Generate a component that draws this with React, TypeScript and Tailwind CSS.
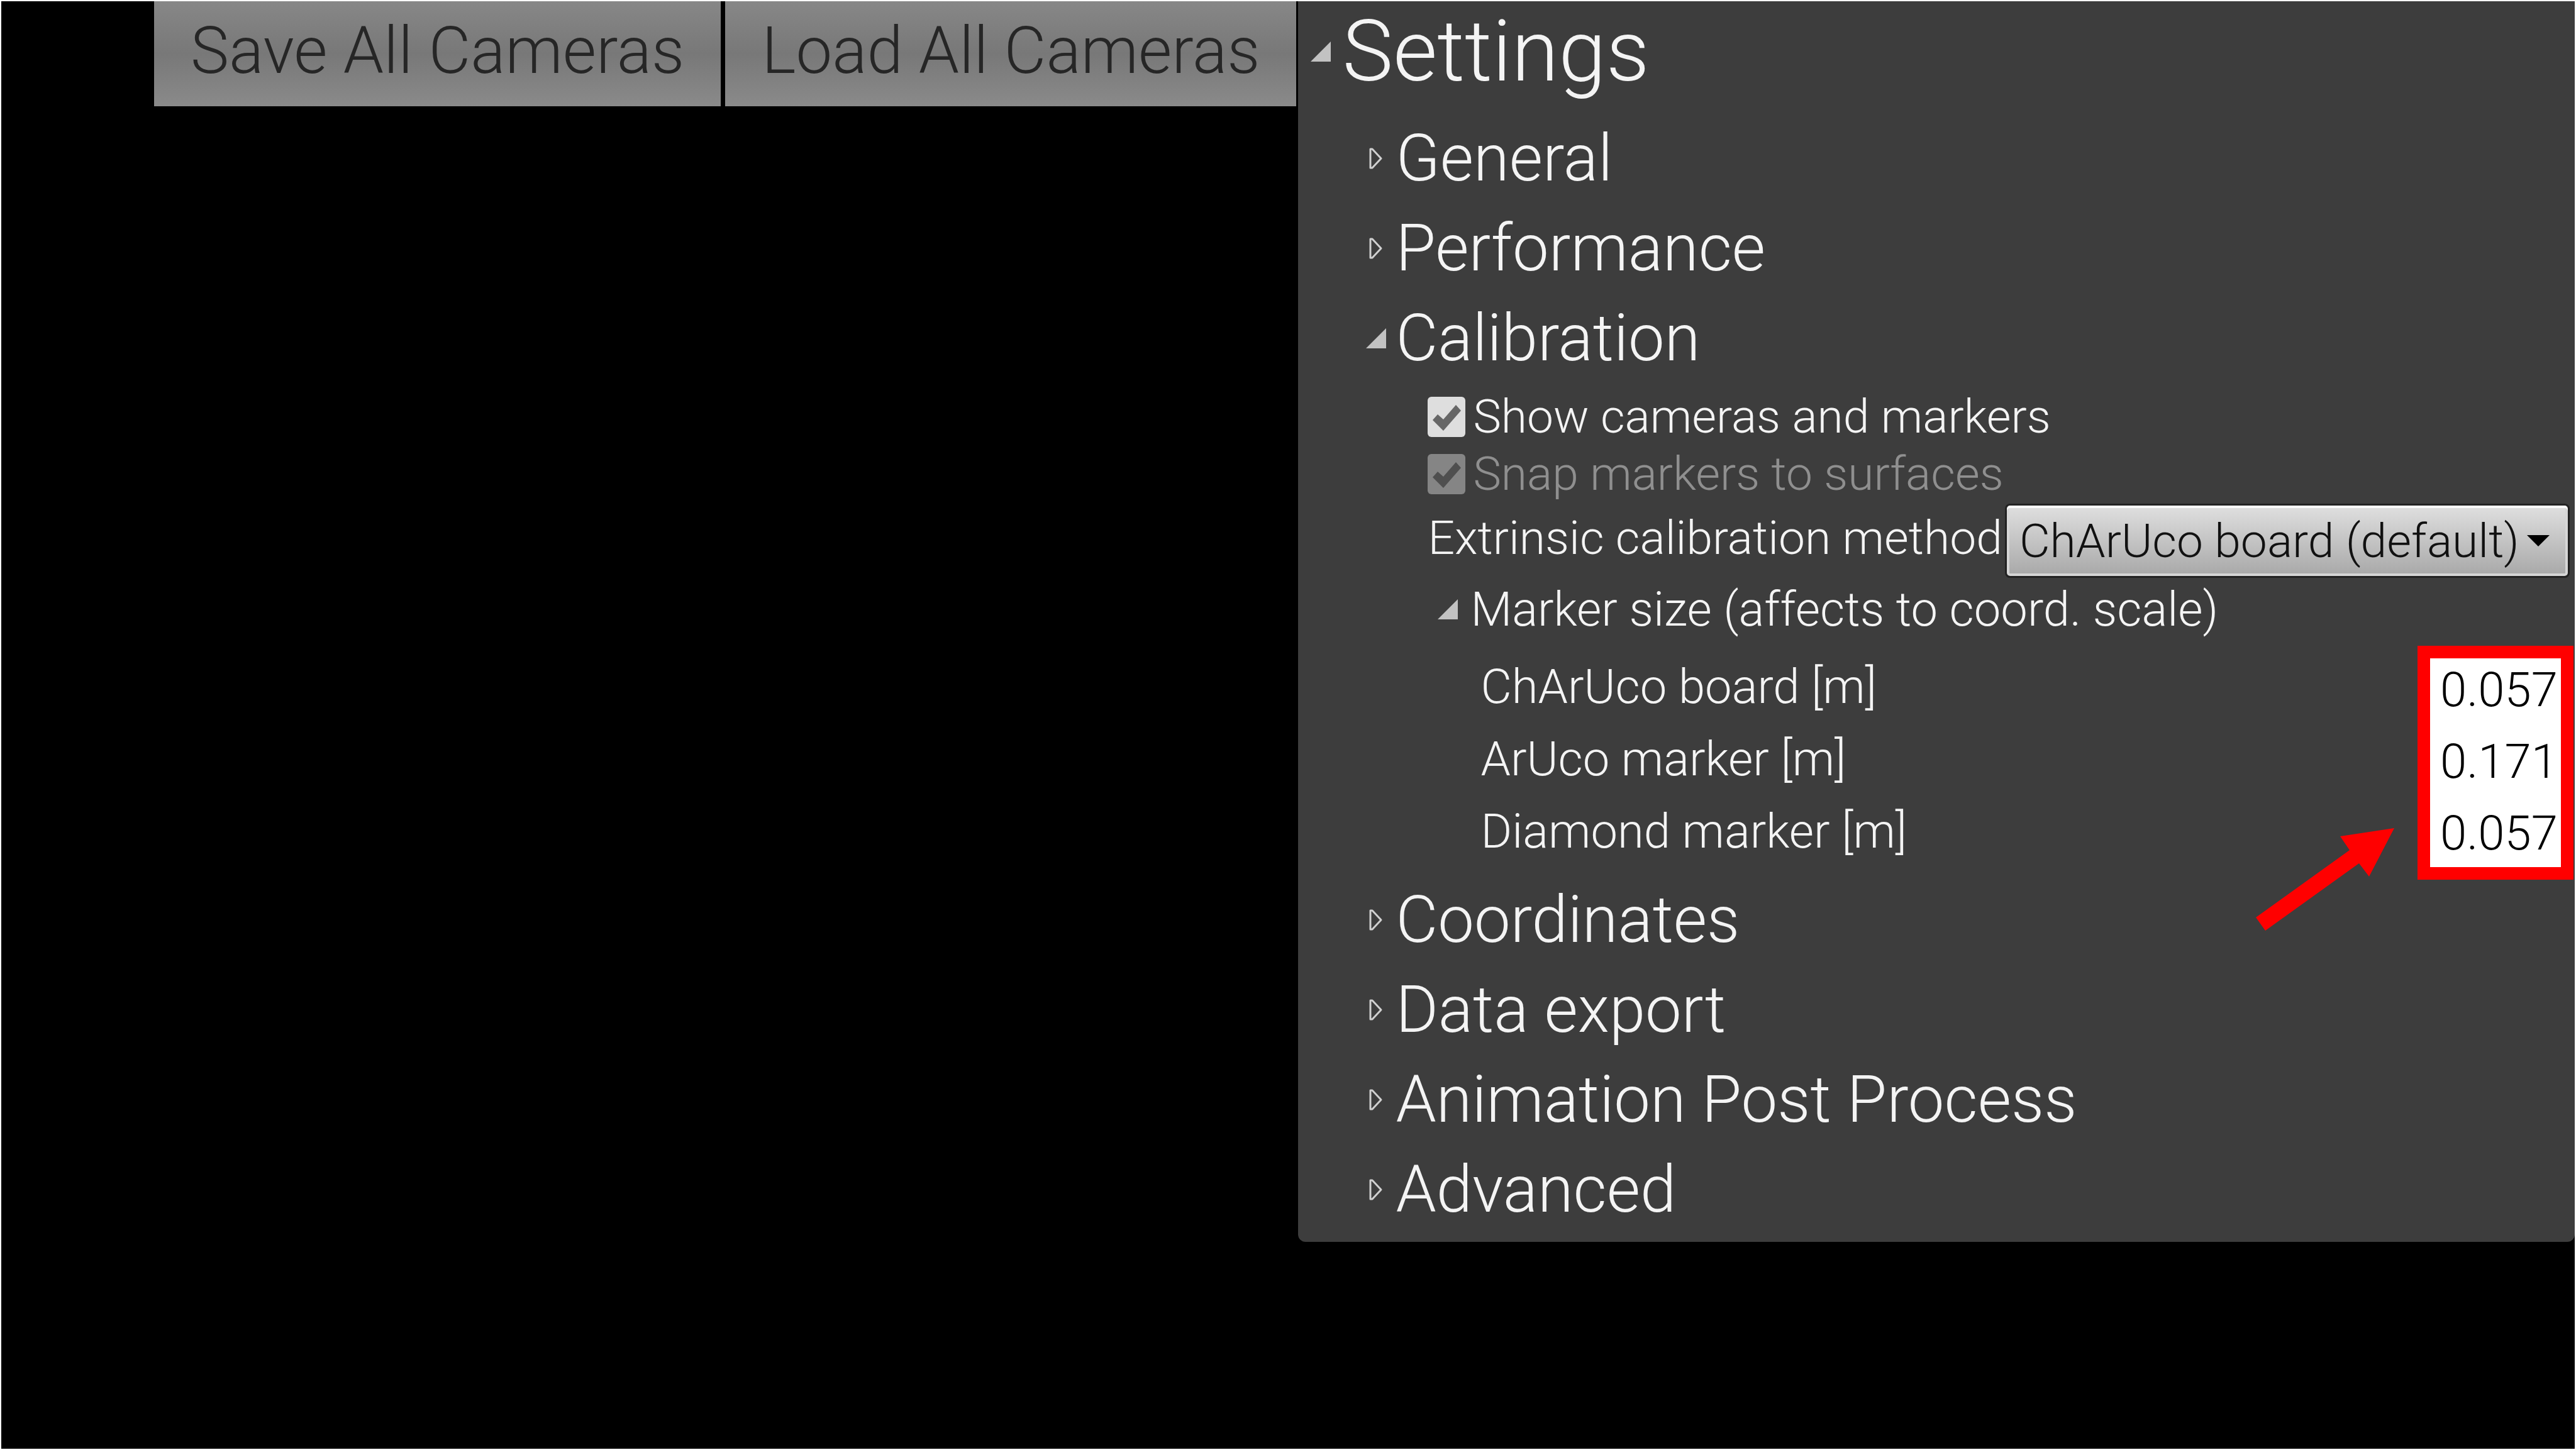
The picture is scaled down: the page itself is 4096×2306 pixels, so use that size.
import { useState, type ReactNode } from "react";

function OpenMark() {
  return (
    <svg className="h-8 w-8" viewBox="0 0 32 32" aria-hidden="true">
      <path d="M32 0V32H0Z" fill="#c2c2c2" />
    </svg>
  );
}

function ClosedMark() {
  return (
    <svg className="ml-1 h-9 w-6" viewBox="0 0 24 36" aria-hidden="true">
      <path d="M3 3H6L20 18L6 33H3Z" fill="none" stroke="#d0d0d0" strokeWidth="3" strokeLinejoin="round" />
    </svg>
  );
}

function Section({ title, open = false, children }: { title: string; open?: boolean; children?: ReactNode }) {
  return (
    <section>
      <h2>
        <button type="button" aria-expanded={open} className="flex h-[143px] items-center text-left text-[103px] leading-[143px]">
          <span className="flex w-[47px] shrink-0 items-center">{open ? <OpenMark /> : <ClosedMark />}</span>
          {title}
        </button>
      </h2>
      {children}
    </section>
  );
}

function Check({ id, label, disabled = false }: { id: string; label: string; disabled?: boolean }) {
  const [on, setOn] = useState(true);
  return (
    <div className={disabled ? "flex h-[91px] items-center gap-3 opacity-45" : "flex h-[91px] items-center gap-3"}>
      <span className="relative flex">
        <input
          id={id}
          type="checkbox"
          checked={on}
          disabled={disabled}
          onChange={(e) => setOn(e.target.checked)}
          className="h-16 w-[60px] appearance-none rounded-md bg-[#dedede]"
        />
        {on && (
          <svg className="pointer-events-none absolute inset-0 h-16 w-[60px]" viewBox="0 0 60 64" aria-hidden="true">
            <path d="M8 37L16 28L25 36L45 13L53 22L25 54Z" fill="#666" />
          </svg>
        )}
      </span>
      <label htmlFor={id} className="leading-[91px]">
        {label}
      </label>
    </div>
  );
}

const sizes = [
  { id: "charuco", label: "ChArUco board [m]", value: "0.057" },
  { id: "aruco", label: "ArUco marker [m]", value: "0.171" },
  { id: "diamond", label: "Diamond marker [m]", value: "0.057" },
];

function MarkerSizes() {
  return (
    <div className="relative flex justify-between text-[76px]">
      <div className="flex flex-col pt-4 pl-[84px]">
        {sizes.map((s) => (
          <label key={s.id} htmlFor={s.id} className="h-[115px] leading-[115px]">
            {s.label}
          </label>
        ))}
      </div>
      <div className="mt-2 mr-0.5 -mb-2 flex w-[248px] flex-col gap-3.5 border-20 border-[#ff0000] bg-white pb-1 text-black">
        {sizes.map((s) => (
          <input key={s.id} id={s.id} type="text" defaultValue={s.value} className="h-[100px] w-full pl-4" />
        ))}
      </div>
      <svg className="absolute right-[287px] bottom-[-90px] h-[164px] w-[220px]" viewBox="0 0 220 164" aria-hidden="true">
        <path d="M220 0L180 77L164 56L15 163L0 142L149 35L134 13Z" fill="#ff0000" />
      </svg>
    </div>
  );
}

const toolButton =
  "h-[167px] bg-linear-to-b from-[#878787] via-[#787878] to-[#8a8a8a] px-[58px] pb-2 text-[103px] text-[#262626] whitespace-nowrap";

export default function App() {
  return (
    <div className="min-h-screen bg-white p-0.5 font-['Roboto',sans-serif] font-light text-[#f4f4f4]">
      <div className="flex min-h-[calc(100vh-4px)] items-start bg-black">
        <div className="flex flex-1 justify-end gap-[7px] pr-[3px]">
          <button type="button" className={toolButton}>
            Save All Cameras
          </button>
          <button type="button" className={toolButton}>
            Load All Cameras
          </button>
        </div>
        <main className="w-[49.6%] rounded-b-xl bg-[#3d3d3d] pb-3 text-[75px]">
          <h1 className="mb-[18px]">
            <button type="button" aria-expanded="true" className="flex h-40 items-center pl-5 text-[136px]">
              <span className="flex w-[50px] shrink-0 items-center">
                <OpenMark />
              </span>
              Settings
            </button>
          </h1>
          <div className="pl-[108px]">
            <Section title="General" />
            <Section title="Performance" />
            <Section title="Calibration" open>
              <div className="pt-2 pl-[98px]">
                <Check id="show" label="Show cameras and markers" />
                <Check id="snap" label="Snap markers to surfaces" disabled />
                <div className="mt-0.5 flex items-center gap-1 pr-2">
                  <label htmlFor="method" className="pb-2.5 leading-none whitespace-nowrap">
                    Extrinsic calibration method
                  </label>
                  <span className="relative flex flex-1">
                    <select
                      id="method"
                      className="h-[118px] w-full appearance-none rounded-lg border-3 border-[#222] bg-linear-to-b from-[#e0e0e0] to-[#a8a8a8] pb-2 pl-5 text-[#111] shadow-[inset_0_4px_0_#fafafa,inset_0_0_0_4px_#d6d6d6]"
                    >
                      <option>ChArUco board (default)</option>
                    </select>
                    <svg className="pointer-events-none absolute top-[50px] right-8 h-[18px] w-9" viewBox="0 0 36 18" aria-hidden="true">
                      <path d="M0 0H36L18 18Z" fill="#000" />
                    </svg>
                  </span>
                </div>
                <h3>
                  <button type="button" aria-expanded="true" className="flex h-[100px] items-center pl-4 text-[76px]">
                    <span className="flex w-[52px] shrink-0 items-center">
                      <OpenMark />
                    </span>
                    Marker size (affects to coord. scale)
                  </button>
                </h3>
                <MarkerSizes />
              </div>
            </Section>
            <Section title="Coordinates" />
            <Section title="Data export" />
            <Section title="Animation Post Process" />
            <Section title="Advanced" />
          </div>
        </main>
      </div>
    </div>
  );
}
